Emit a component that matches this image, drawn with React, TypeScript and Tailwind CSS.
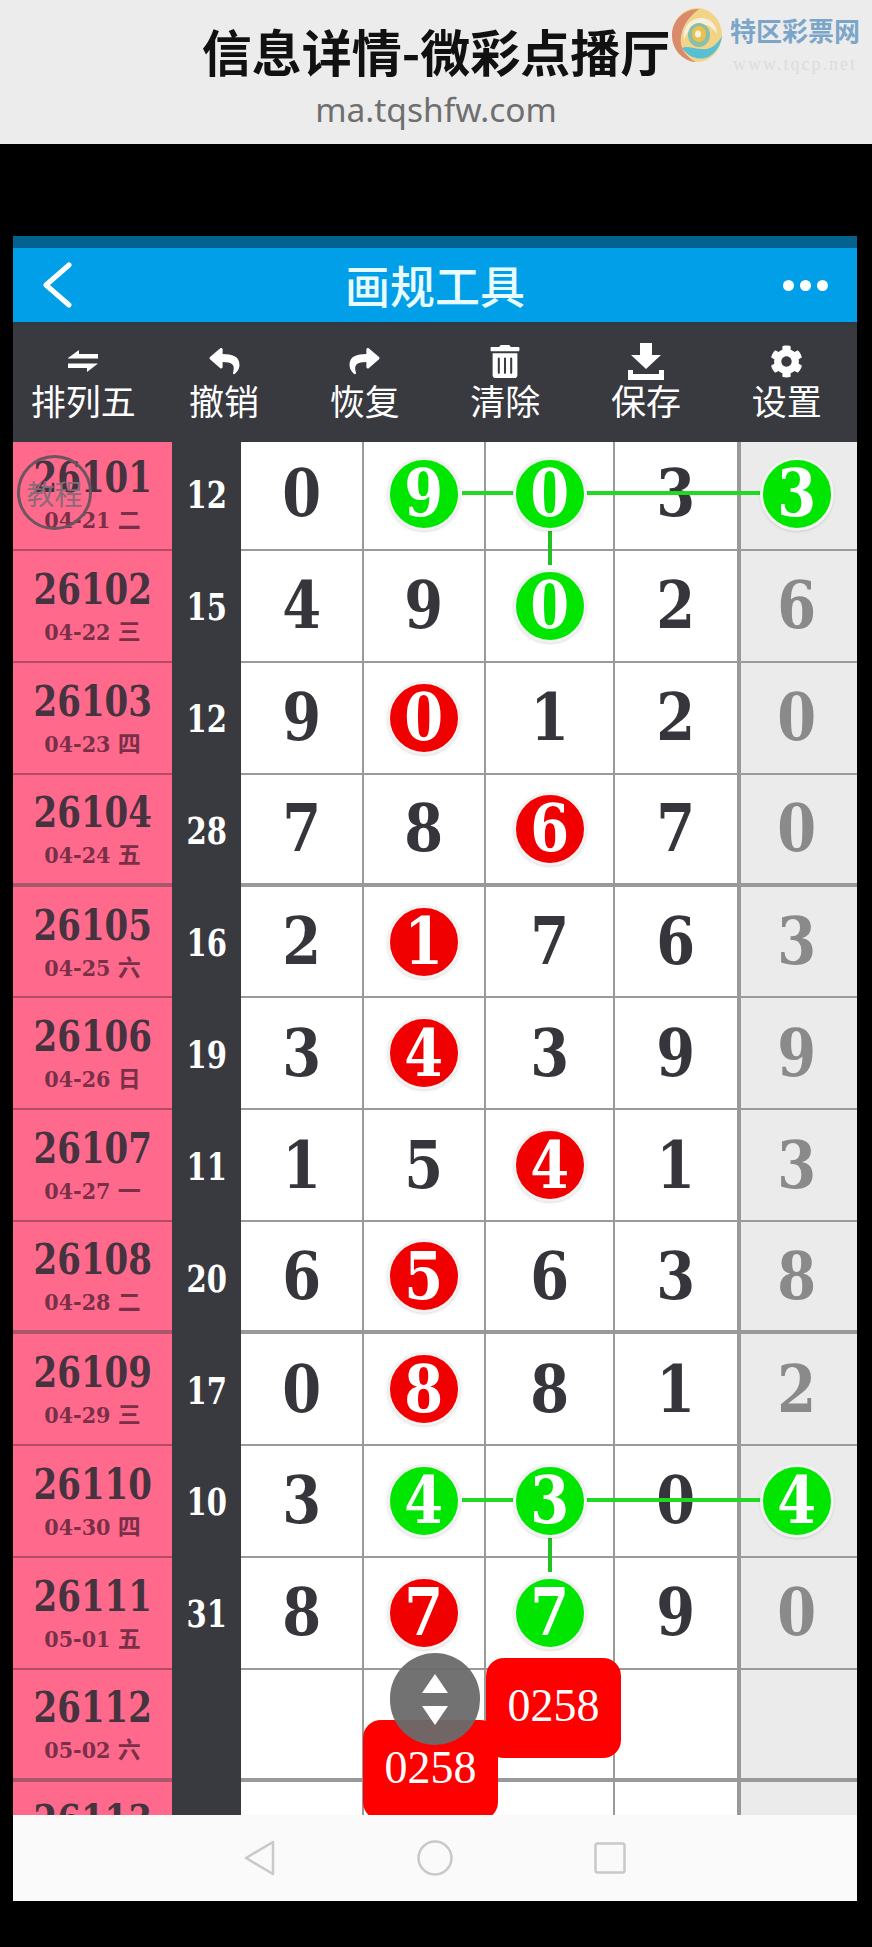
import { FaReply, FaShare, FaTrashAlt, FaCog } from "react-icons/fa";

type Ball = { col: number; color: "green" | "red" };

const rows: { id: string; date: string; sum: string; nums: string[]; balls: Ball[] }[] = [
  { id: "26101", date: "04-21 二", sum: "12", nums: ["0", "9", "0", "3", "3"], balls: [{ col: 1, color: "green" }, { col: 2, color: "green" }, { col: 4, color: "green" }] },
  { id: "26102", date: "04-22 三", sum: "15", nums: ["4", "9", "0", "2", "6"], balls: [{ col: 2, color: "green" }] },
  { id: "26103", date: "04-23 四", sum: "12", nums: ["9", "0", "1", "2", "0"], balls: [{ col: 1, color: "red" }] },
  { id: "26104", date: "04-24 五", sum: "28", nums: ["7", "8", "6", "7", "0"], balls: [{ col: 2, color: "red" }] },
  { id: "26105", date: "04-25 六", sum: "16", nums: ["2", "1", "7", "6", "3"], balls: [{ col: 1, color: "red" }] },
  { id: "26106", date: "04-26 日", sum: "19", nums: ["3", "4", "3", "9", "9"], balls: [{ col: 1, color: "red" }] },
  { id: "26107", date: "04-27 一", sum: "11", nums: ["1", "5", "4", "1", "3"], balls: [{ col: 2, color: "red" }] },
  { id: "26108", date: "04-28 二", sum: "20", nums: ["6", "5", "6", "3", "8"], balls: [{ col: 1, color: "red" }] },
  { id: "26109", date: "04-29 三", sum: "17", nums: ["0", "8", "8", "1", "2"], balls: [{ col: 1, color: "red" }] },
  { id: "26110", date: "04-30 四", sum: "10", nums: ["3", "4", "3", "0", "4"], balls: [{ col: 1, color: "green" }, { col: 2, color: "green" }, { col: 4, color: "green" }] },
  { id: "26111", date: "05-01 五", sum: "31", nums: ["8", "7", "7", "9", "0"], balls: [{ col: 1, color: "red" }, { col: 2, color: "green" }] },
  { id: "26112", date: "05-02 六", sum: "", nums: ["", "", "", "", ""], balls: [] },
  { id: "26113", date: "05-03 日", sum: "", nums: ["", "", "", "", ""], balls: [] },
];

const colWidths = ["w-[123px]", "w-[122px]", "w-[129px]", "w-[122px]", "flex-1"];

function SwapIcon() {
  return (
    <svg viewBox="0 0 32 24" className="w-[32px] h-[24px]" fill="#fff">
      <path d="M1 9 12 1v4h19v4.500H1zM1 14.500h30L20 23v-4H1z" />
    </svg>
  );
}

function SaveIcon() {
  return (
    <svg viewBox="0 0 36 37" className="w-[36px] h-[37px]" fill="#fff">
      <path d="M12 0h12v12h9L18 26 3 12h9zM0 27h5v4h26v-4h5v10H0z" />
    </svg>
  );
}

const tools = [
  { label: "排列五", icon: <SwapIcon /> },
  { label: "撤销", icon: <FaReply className="w-[35px] h-[30px]" /> },
  { label: "恢复", icon: <FaShare className="w-[35px] h-[30px]" /> },
  { label: "清除", icon: <FaTrashAlt className="w-[30px] h-[33px]" /> },
  { label: "保存", icon: <SaveIcon /> },
  { label: "设置", icon: <FaCog className="w-[33px] h-[33px]" /> },
];

function Logo() {
  return (
    <div className="absolute left-[672px] top-[8px] flex">
      <svg viewBox="0 0 50 54" className="w-[50px] h-[54px] shrink-0" fill="none">
        <ellipse cx="25" cy="27" rx="25" ry="27" fill="#f2d488" />
        <path d="M27 1C10 1 0 14 0 27c0 14 10 26 24 27-10-5-17-14-15-26C11 16 19 7 27 1z" fill="#d98a6c" />
        <path d="M10 40c6 9 18 14 28 8 6-4 11-11 12-20-5 9-12 14-20 13-8 0-15-4-20-1z" fill="#58c0d2" />
        <path d="M12 32c-2-12 6-22 17-22 9 0 16 7 16 16-4-6-9-10-16-9-8 0-14 7-17 15z" fill="#f5efe0" />
        <ellipse cx="27" cy="27" rx="11" ry="12" fill="#8dbfa6" />
        <ellipse cx="27" cy="26" rx="7" ry="8" fill="#e9c24f" />
        <ellipse cx="26" cy="26" rx="3" ry="3.500" fill="#f4f1e6" />
      </svg>
      <div className="ml-[8px] flex flex-col items-center font-['Noto_Sans_CJK_SC',sans-serif]">
        <span className="mt-[5px] text-[26px] leading-[34px] font-bold text-[#7ba5c9] whitespace-nowrap">特区彩票网</span>
        <span className="mt-[8px] text-[18px] leading-[18px] text-[#dcdcdc] font-['Liberation_Serif',serif] tracking-[2px] whitespace-nowrap">www.tqcp.net</span>
      </div>
    </div>
  );
}

function Digit({ value }: { value: string }) {
  return <span className="inline-block scale-x-[0.94]">{value}</span>;
}

function Row({ row, index }: { row: (typeof rows)[number]; index: number }) {
  const thick = index % 4 === 3;
  return (
    <div className="flex h-[111.9px] shrink-0">
      <div
        className={`w-[159px] flex flex-col items-center justify-center pt-[2px] bg-[#ff6a8c] text-[#45333f] font-['DejaVu_Serif_Condensed','Liberation_Serif',serif] font-bold ${
          thick ? "border-b-[4px] border-[#a8566c]" : "border-b-2 border-[#b04c68]"
        }`}
      >
        <span className="inline-block scale-x-[0.9] text-[42px] leading-[46px]">{row.id}</span>
        <span className="mt-[4px] text-[23px] leading-[30px] text-[#7a2f48] font-['DejaVu_Serif_Condensed','Noto_Sans_CJK_SC',serif]">{row.date}</span>
      </div>
      <div className="w-[69px] flex items-center justify-center bg-[#393940] text-white text-[38px] font-bold font-['DejaVu_Serif_Condensed','Liberation_Serif',serif]">
        <span className="inline-block scale-x-[0.85]">{row.sum}</span>
      </div>
      <div className={`flex flex-1 bg-white ${thick ? "border-b-[4px] border-[#999]" : "border-b-2 border-[#9a9a9a]"}`}>
        {row.nums.map((n, i) => {
          const ball = row.balls.find((b) => b.col === i);
          return (
            <div
              key={i}
              className={`${colWidths[i]} flex items-center justify-center text-[66px] font-bold font-['DejaVu_Serif_Condensed','Liberation_Serif',serif] ${
                i === 4 ? "bg-[#ebebeb] text-[#8a8a8a] border-l-[4px] border-[#999] pr-[4px]" : "text-[#35353b]"
              } ${i < 3 ? "border-r-2 border-[#9a9a9a]" : ""}`}
            >
              {ball ? (
                <span
                  className={`relative z-10 w-[74px] h-[74px] rounded-full border-[3px] border-[#f2f2f2] shadow-sm flex items-center justify-center text-white ${
                    ball.color === "green" ? "bg-[#00e600]" : "bg-[#f00000]"
                  }`}
                >
                  <Digit value={n} />
                </span>
              ) : (
                <Digit value={n} />
              )}
            </div>
          );
        })}
      </div>
    </div>
  );
}

export default function App() {
  return (
    <div className="w-[872px] h-[1947px] bg-black flex flex-col overflow-hidden">
      {/* Title */}
      <div className="relative h-[144px] shrink-0 bg-[#ececec] flex flex-col items-center font-['Noto_Sans_CJK_SC',sans-serif]">
        <div className="text-[50px] leading-[56px] mt-[22px] font-bold text-[#111] whitespace-nowrap">信息详情-微彩点播厅</div>
        <div className="mt-[9px] text-[33.5px] leading-[44px] text-[#6f6f6f] font-['Noto_Sans',sans-serif]">ma.tqshfw.com</div>
        <Logo />
      </div>

      {/* Phone screen */}
      <div className="mt-[92px] mx-[13px] w-[844px] h-[1665px] flex flex-col">
        <div className="h-[12px] bg-[#04628f] shrink-0" />
        <div className="h-[74px] bg-[#009fe8] shrink-0 flex items-center justify-between text-white px-[29px]">
          <div className="w-[45px]">
            <svg viewBox="0 0 30 46" className="w-[30px] h-[46px]" fill="none" stroke="#fff" strokeWidth="5" strokeLinecap="round" strokeLinejoin="round">
              <path d="M27 3 4 23l23 20" />
            </svg>
          </div>
          <span className="text-[45px] font-medium font-['Noto_Sans_CJK_SC',sans-serif] text-[#e8fbff]">画规工具</span>
          <div className="flex gap-[6px] w-[45px]">
            <span className="w-[11px] h-[11px] rounded-full bg-white" />
            <span className="w-[11px] h-[11px] rounded-full bg-white" />
            <span className="w-[11px] h-[11px] rounded-full bg-white" />
          </div>
        </div>

        {/* Toolbar */}
        <div className="h-[120px] bg-[#393940] border-t-[4px] border-[#2f3a44] shrink-0 flex text-white">
          {tools.map((t) => (
            <div key={t.label} className="flex-1 flex flex-col items-center pt-[16px]">
              <div className="h-[38px] flex items-center justify-center">{t.icon}</div>
              <span className="text-[35px] leading-[40px] font-['Noto_Sans_CJK_SC',sans-serif]">{t.label}</span>
            </div>
          ))}
        </div>

        {/* Table */}
        <div className="relative h-[1373px] shrink-0 overflow-hidden bg-[#393940]">
          <div className="-mt-[3px]">
            {rows.map((r, i) => (
              <Row key={r.id} row={r} index={i} />
            ))}
          </div>

          {/* connecting lines */}
          <div className="absolute left-[449px] top-[49px] w-[320px] h-[4px] bg-[#22d922]" />
          <div className="absolute left-[535px] top-[88px] w-[4px] h-[35px] bg-[#22c222]" />
          <div className="absolute left-[449px] top-[1056px] w-[320px] h-[4px] bg-[#22d922]" />
          <div className="absolute left-[535px] top-[1095px] w-[4px] h-[35px] bg-[#22c222]" />

          {/* tutorial stamp */}
          <div className="absolute left-[4px] top-[13px] w-[75px] h-[75px] rounded-full border-[3px] border-[#6b5560] flex items-center justify-center text-[28px] text-[#8a6a78] font-['Noto_Sans_CJK_SC',sans-serif]">
            教程
          </div>

          {/* floating badges */}
          <div className="absolute left-[473px] top-[1216px] w-[135px] h-[100px] rounded-[18px] bg-[#ff0000] text-white text-[46px] flex items-center justify-center pb-[6px] font-['Liberation_Serif',serif]">
            0258
          </div>
          <div className="absolute left-[350px] top-[1278px] w-[135px] h-[100px] rounded-[18px] bg-[#ff0000] text-white text-[46px] flex items-center justify-center pb-[6px] font-['Liberation_Serif',serif]">
            0258
          </div>
          <div className="absolute left-[377px] top-[1211px] w-[90px] h-[92px] rounded-full bg-[#6a6a6a]/95 flex flex-col items-center justify-center gap-[13px]">
            <span className="w-0 h-0 border-x-[13px] border-x-transparent border-b-[19px] border-b-white" />
            <span className="w-0 h-0 border-x-[13px] border-x-transparent border-t-[19px] border-t-white" />
          </div>
        </div>

        {/* Nav bar */}
        <div className="h-[86px] bg-[#fafafa] shrink-0 flex items-center justify-center gap-[141px]">
          <svg viewBox="0 0 32 36" className="w-[32px] h-[36px]" fill="none" stroke="#c9c9c9" strokeWidth="2.500" strokeLinejoin="round">
            <path d="M29 2v32L2 18z" />
          </svg>
          <svg viewBox="0 0 36 36" className="w-[36px] h-[36px]" fill="none" stroke="#c9c9c9" strokeWidth="2.500">
            <circle cx="18" cy="18" r="16.500" />
          </svg>
          <svg viewBox="0 0 32 32" className="w-[32px] h-[32px]" fill="none" stroke="#c9c9c9" strokeWidth="2.500">
            <rect x="1.500" y="1.500" width="29" height="29" rx="2" />
          </svg>
        </div>
      </div>
    </div>
  );
}
